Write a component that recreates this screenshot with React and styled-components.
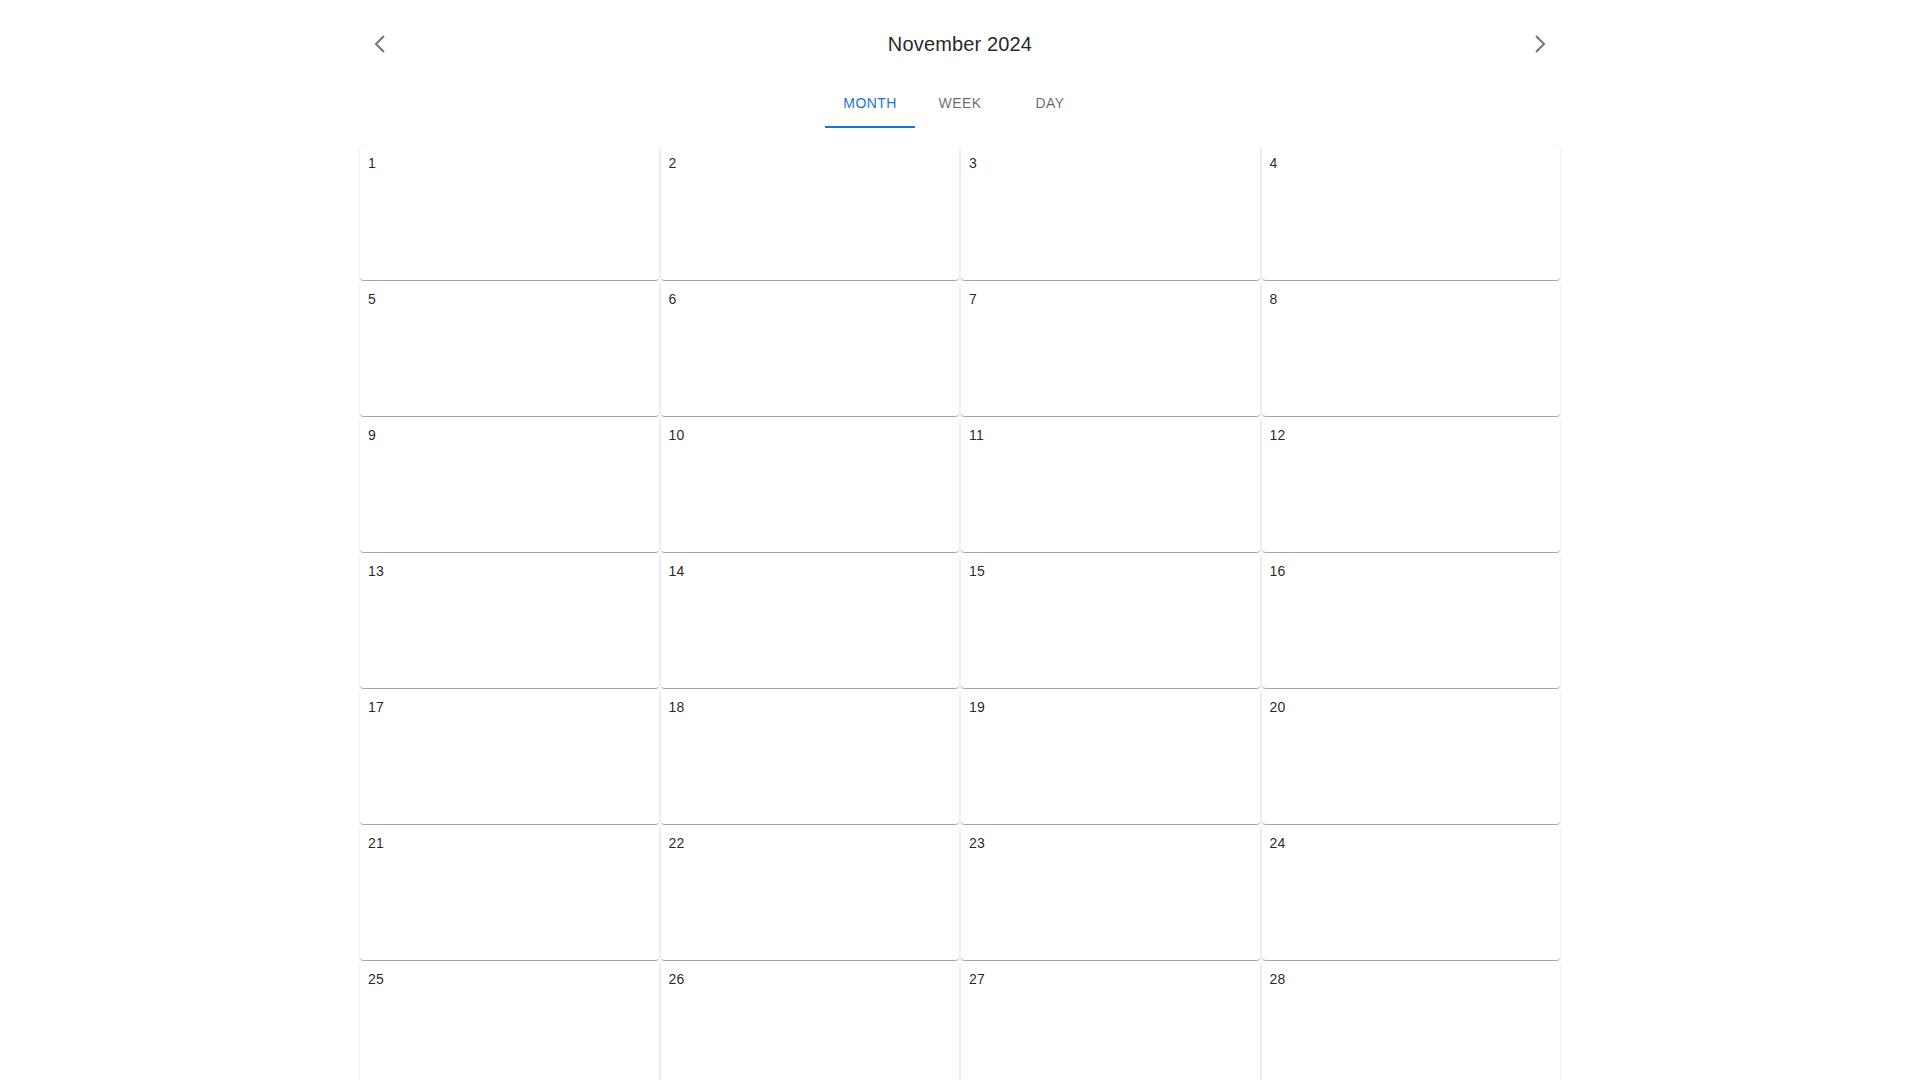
import React, { useState } from "react";
import styled, { createGlobalStyle } from "styled-components";

const FONT = `"Liberation Sans", Arial, Helvetica, sans-serif`;

const GlobalStyle = createGlobalStyle`
  html { scrollbar-width: none; }
  html::-webkit-scrollbar { display: none; }
  body {
    margin: 0;
    background: #ffffff;
    font-family: ${FONT};
    color: rgba(0, 0, 0, 0.87);
  }
`;

const Page = styled.div`
  width: 1200px;
  margin: 0 auto;
  padding-top: 24px;
`;

const Header = styled.div`
  display: flex;
  align-items: center;
  justify-content: space-between;
  height: 40px;
`;

const IconButton = styled.button`
  width: 40px;
  height: 40px;
  border: none;
  background: transparent;
  border-radius: 50%;
  display: flex;
  align-items: center;
  justify-content: center;
  padding: 0;
  cursor: pointer;
  color: rgba(0, 0, 0, 0.54);
  &:hover { background: rgba(0, 0, 0, 0.04); }
`;

const Title = styled.h1`
  margin: 0;
  font-family: ${FONT};
  font-size: 20px;
  font-weight: 400;
  letter-spacing: 0.0075em;
  line-height: 1.6;
  color: rgba(0, 0, 0, 0.87);
`;

const TabBar = styled.div`
  display: flex;
  justify-content: center;
  margin-top: 16px;
`;

const Tab = styled.button`
  position: relative;
  min-width: 90px;
  height: 48px;
  padding: 12px 16px 12px;
  border: none;
  background: transparent;
  font-family: ${FONT};
  font-size: 14px;
  font-weight: 400;
  line-height: 1.25;
  letter-spacing: 0.02857em;
  text-transform: uppercase;
  color: ${(p) => (p.$active ? "#1976d2" : "rgba(0, 0, 0, 0.6)")};
  cursor: pointer;
  &::after {
    content: "";
    position: absolute;
    left: 0;
    right: 0;
    bottom: 0;
    height: 2px;
    background: ${(p) => (p.$active ? "#1976d2" : "transparent")};
  }
`;

const Grid = styled.div`
  display: grid;
  grid-template-columns: repeat(4, 1fr);
  grid-auto-rows: 135px;
  row-gap: 1px;
  column-gap: 2px;
  margin-top: 17px;
`;

const Cell = styled.div`
  background: #fff;
  border-radius: 4px;
  padding: 8px;
  box-shadow: 0px 2px 1px -1px rgba(0, 0, 0, 0.2),
    0px 1px 1px 0px rgba(0, 0, 0, 0.14), 0px 1px 3px 0px rgba(0, 0, 0, 0.12);
`;

const DayNumber = styled.div`
  font-family: ${FONT};
  font-size: 14px;
  line-height: 1.43;
  letter-spacing: 0.01071em;
  color: rgba(0, 0, 0, 0.87);
`;

const Chevron = ({ dir }) => (
  <svg width="24" height="24" viewBox="0 0 24 24" fill="none">
    <path
      d={dir === "left" ? "M16 4 L8 12 L16 20" : "M8 4 L16 12 L8 20"}
      stroke="currentColor"
      strokeWidth="2"
      strokeLinecap="butt"
      strokeLinejoin="miter"
    />
  </svg>
);

export default function App() {
  const [view, setView] = useState("month");
  const days = Array.from({ length: 30 }, (_, i) => i + 1);
  return (
    <>
      <GlobalStyle />
      <Page>
        <Header>
          <IconButton aria-label="previous">
            <Chevron dir="left" />
          </IconButton>
          <Title>November 2024</Title>
          <IconButton aria-label="next">
            <Chevron dir="right" />
          </IconButton>
        </Header>
        <TabBar>
          {["month", "week", "day"].map((v) => (
            <Tab key={v} $active={view === v} onClick={() => setView(v)}>
              {v}
            </Tab>
          ))}
        </TabBar>
        <Grid>
          {days.map((d) => (
            <Cell key={d}>
              <DayNumber>{d}</DayNumber>
            </Cell>
          ))}
        </Grid>
      </Page>
    </>
  );
}
